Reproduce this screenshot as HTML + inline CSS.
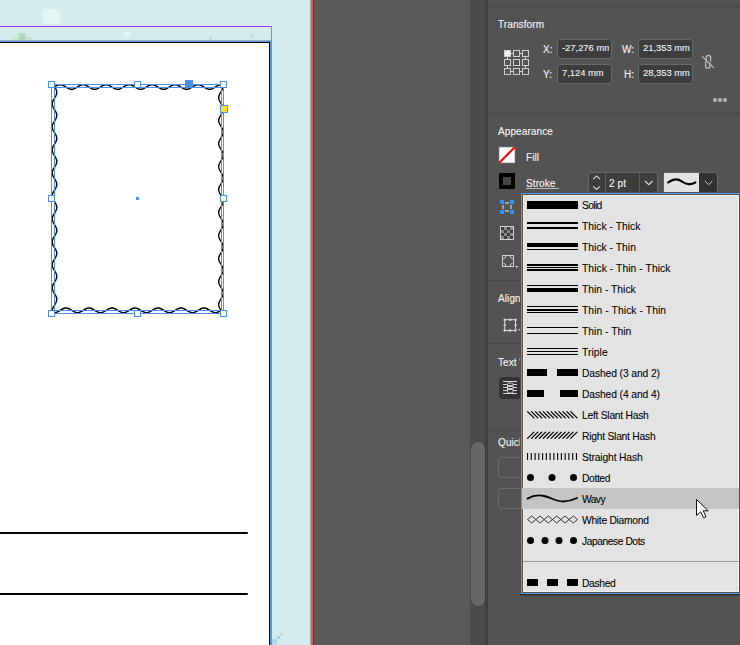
<!DOCTYPE html><html><head><meta charset="utf-8"><style>
*{margin:0;padding:0;box-sizing:border-box}
html,body{width:740px;height:645px;overflow:hidden;background:#d4ecec;font-family:"Liberation Sans",sans-serif}
.a{position:absolute}
.t{position:absolute;white-space:nowrap;color:#f4f4f4;font-size:10px;letter-spacing:0.1px;line-height:12px;-webkit-text-stroke:0.12px #f4f4f4}
.lt{position:absolute;white-space:nowrap;color:#000;font-size:10.3px;line-height:12px;left:582px;-webkit-text-stroke:0.08px #000}
.inp{position:absolute;background:#3d3d3d;border:1px solid #676767;border-radius:3px}
</style></head><body>
<div class="a" style="left:43px;top:9px;width:17px;height:15px;background:#e4f5f5;border-radius:4px;filter:blur(0.5px)"></div>
<div class="a" style="left:12px;top:37px;width:20px;height:4px;background:#c9e3cd;"></div>
<div class="a" style="left:18px;top:33px;width:8px;height:8px;background:#bcdcc2;"></div>
<div class="a" style="left:20px;top:35px;width:4px;height:6px;background:#aed3b6;"></div>
<div class="a" style="left:123px;top:31px;width:8px;height:7px;background:#e2f3f1;border-radius:2px"></div>
<div class="a" style="left:209px;top:37px;width:3px;height:3px;background:#b9dde8;"></div>
<div class="a" style="left:251px;top:35px;width:3px;height:3px;background:#b5dbe8;"></div>
<div class="a" style="left:280px;top:633px;width:3px;height:3px;background:#b9dfe4;"></div>
<div class="a" style="left:277px;top:636px;width:3px;height:3px;background:#9fd2ea;"></div>
<div class="a" style="left:272px;top:639px;width:5px;height:3px;background:#acd9e9;"></div>
<div class="a" style="left:272px;top:642px;width:5px;height:3px;background:#b5dde9;"></div>
<div class="a" style="left:0px;top:26px;width:272px;height:1px;background:#9a35f5;"></div>
<div class="a" style="left:271px;top:26px;width:1px;height:619px;background:#ff44ff;"></div>
<div class="a" style="left:0px;top:40px;width:271px;height:1px;background:#9fb5ad;"></div>
<div class="a" style="left:0px;top:41px;width:271px;height:1px;background:#4b94ee;"></div>
<div class="a" style="left:270px;top:41px;width:1px;height:604px;background:#4b94ee;"></div>
<div class="a" style="left:0px;top:42px;width:270px;height:603px;background:#000;"></div>
<div class="a" style="left:0px;top:43px;width:269px;height:602px;background:#fff;"></div>
<div class="a" style="left:0px;top:532px;width:248px;height:2px;background:#000;border-radius:0 1px 1px 0"></div>
<div class="a" style="left:0px;top:593px;width:248px;height:2px;background:#000;border-radius:0 1px 1px 0"></div>
<svg class="a" style="left:0;top:0" width="320" height="645" viewBox="0 0 320 645">
<g fill="none" stroke="#000" stroke-width="1.4"><path d="M54.5 86.9 L55.5 86.3 L56.5 85.7 L57.5 85.3 L58.5 84.9 L59.5 84.7 L60.5 84.7 L61.5 84.9 L62.5 85.2 L63.5 85.6 L64.5 86.2 L65.5 86.8 L66.5 87.4 L67.5 88.0 L68.5 88.5 L69.5 88.9 L70.5 89.2 L71.5 89.3 L72.5 89.2 L73.5 89.0 L74.5 88.6 L75.5 88.1 L76.5 87.5 L77.5 86.9 L78.5 86.3 L79.5 85.7 L80.5 85.3 L81.5 84.9 L82.5 84.7 L83.5 84.7 L84.5 84.9 L85.5 85.2 L86.5 85.6 L87.5 86.2 L88.5 86.8 L89.5 87.4 L90.5 88.0 L91.5 88.5 L92.5 88.9 L93.5 89.2 L94.5 89.3 L95.5 89.2 L96.5 89.0 L97.5 88.6 L98.5 88.1 L99.5 87.5 L100.5 86.9 L101.5 86.3 L102.5 85.7 L103.5 85.3 L104.5 84.9 L105.5 84.7 L106.5 84.7 L107.5 84.9 L108.5 85.2 L109.5 85.6 L110.5 86.2 L111.5 86.8 L112.5 87.4 L113.5 88.0 L114.5 88.5 L115.5 88.9 L116.5 89.2 L117.5 89.3 L118.5 89.2 L119.5 89.0 L120.5 88.6 L121.5 88.1 L122.5 87.5 L123.5 86.9 L124.5 86.3 L125.5 85.7 L126.5 85.3 L127.5 84.9 L128.5 84.7 L129.5 84.7 L130.5 84.9 L131.5 85.2 L132.5 85.6 L133.5 86.2 L134.5 86.8 L135.5 87.4 L136.5 88.0 L137.5 88.5 L138.5 88.9 L139.5 89.2 L140.5 89.3 L141.5 89.2 L142.5 89.0 L143.5 88.6 L144.5 88.1 L145.5 87.5 L146.5 86.9 L147.5 86.3 L148.5 85.7 L149.5 85.3 L150.5 84.9 L151.5 84.7 L152.5 84.7 L153.5 84.9 L154.5 85.2 L155.5 85.6 L156.5 86.2 L157.5 86.8 L158.5 87.4 L159.5 88.0 L160.5 88.5 L161.5 88.9 L162.5 89.2 L163.5 89.3 L164.5 89.2 L165.5 89.0 L166.5 88.6 L167.5 88.1 L168.5 87.5 L169.5 86.9 L170.5 86.3 L171.5 85.7 L172.5 85.3 L173.5 84.9 L174.5 84.7 L175.5 84.7 L176.5 84.9 L177.5 85.2 L178.5 85.6 L179.5 86.2 L180.5 86.8 L181.5 87.4 L182.5 88.0 L183.5 88.5 L184.5 88.9 L185.5 89.2 L186.5 89.3 L187.5 89.2 L188.5 89.0 L189.5 88.6 L190.5 88.1 L191.5 87.5 L192.5 86.9 L193.5 86.3 L194.5 85.7 L195.5 85.3 L196.5 84.9 L197.5 84.7 L198.5 84.7 L199.5 84.9 L200.5 85.2 L201.5 85.6 L202.5 86.2 L203.5 86.8 L204.5 87.4 L205.5 88.0 L206.5 88.5 L207.5 88.9 L208.5 89.2 L209.5 89.3 L210.5 89.2 L211.5 89.0 L212.5 88.6 L213.5 88.1 L214.5 87.5 L215.5 86.9 L216.5 86.3 L217.5 85.7 L218.5 85.3 L219.5 84.9 L220.5 84.7 L221.5 84.7"/><path d="M223.2 87.0 L223.0 88.0 L222.6 89.0 L222.1 90.0 L221.5 91.0 L220.9 92.0 L220.3 93.0 L219.7 94.0 L219.3 95.0 L218.9 96.0 L218.7 97.0 L218.7 98.0 L218.9 99.0 L219.2 100.0 L219.6 101.0 L220.2 102.0 L220.8 103.0 L221.4 104.0 L222.0 105.0 L222.5 106.0 L222.9 107.0 L223.2 108.0 L223.3 109.0 L223.2 110.0 L223.0 111.0 L222.6 112.0 L222.1 113.0 L221.5 114.0 L220.9 115.0 L220.3 116.0 L219.7 117.0 L219.3 118.0 L218.9 119.0 L218.7 120.0 L218.7 121.0 L218.9 122.0 L219.2 123.0 L219.6 124.0 L220.2 125.0 L220.8 126.0 L221.4 127.0 L222.0 128.0 L222.5 129.0 L222.9 130.0 L223.2 131.0 L223.3 132.0 L223.2 133.0 L223.0 134.0 L222.6 135.0 L222.1 136.0 L221.5 137.0 L220.9 138.0 L220.3 139.0 L219.7 140.0 L219.3 141.0 L218.9 142.0 L218.7 143.0 L218.7 144.0 L218.9 145.0 L219.2 146.0 L219.6 147.0 L220.2 148.0 L220.8 149.0 L221.4 150.0 L222.0 151.0 L222.5 152.0 L222.9 153.0 L223.2 154.0 L223.3 155.0 L223.2 156.0 L223.0 157.0 L222.6 158.0 L222.1 159.0 L221.5 160.0 L220.9 161.0 L220.3 162.0 L219.7 163.0 L219.3 164.0 L218.9 165.0 L218.7 166.0 L218.7 167.0 L218.9 168.0 L219.2 169.0 L219.6 170.0 L220.2 171.0 L220.8 172.0 L221.4 173.0 L222.0 174.0 L222.5 175.0 L222.9 176.0 L223.2 177.0 L223.3 178.0 L223.2 179.0 L223.0 180.0 L222.6 181.0 L222.1 182.0 L221.5 183.0 L220.9 184.0 L220.3 185.0 L219.7 186.0 L219.3 187.0 L218.9 188.0 L218.7 189.0 L218.7 190.0 L218.9 191.0 L219.2 192.0 L219.6 193.0 L220.2 194.0 L220.8 195.0 L221.4 196.0 L222.0 197.0 L222.5 198.0 L222.9 199.0 L223.2 200.0 L223.3 201.0 L223.2 202.0 L223.0 203.0 L222.6 204.0 L222.1 205.0 L221.5 206.0 L220.9 207.0 L220.3 208.0 L219.7 209.0 L219.3 210.0 L218.9 211.0 L218.7 212.0 L218.7 213.0 L218.9 214.0 L219.2 215.0 L219.6 216.0 L220.2 217.0 L220.8 218.0 L221.4 219.0 L222.0 220.0 L222.5 221.0 L222.9 222.0 L223.2 223.0 L223.3 224.0 L223.2 225.0 L223.0 226.0 L222.6 227.0 L222.1 228.0 L221.5 229.0 L220.9 230.0 L220.3 231.0 L219.7 232.0 L219.3 233.0 L218.9 234.0 L218.7 235.0 L218.7 236.0 L218.9 237.0 L219.2 238.0 L219.6 239.0 L220.2 240.0 L220.8 241.0 L221.4 242.0 L222.0 243.0 L222.5 244.0 L222.9 245.0 L223.2 246.0 L223.3 247.0 L223.2 248.0 L223.0 249.0 L222.6 250.0 L222.1 251.0 L221.5 252.0 L220.9 253.0 L220.3 254.0 L219.7 255.0 L219.3 256.0 L218.9 257.0 L218.7 258.0 L218.7 259.0 L218.9 260.0 L219.2 261.0 L219.6 262.0 L220.2 263.0 L220.8 264.0 L221.4 265.0 L222.0 266.0 L222.5 267.0 L222.9 268.0 L223.2 269.0 L223.3 270.0 L223.2 271.0 L223.0 272.0 L222.6 273.0 L222.1 274.0 L221.5 275.0 L220.9 276.0 L220.3 277.0 L219.7 278.0 L219.3 279.0 L218.9 280.0 L218.7 281.0 L218.7 282.0 L218.9 283.0 L219.2 284.0 L219.6 285.0 L220.2 286.0 L220.8 287.0 L221.4 288.0 L222.0 289.0 L222.5 290.0 L222.9 291.0 L223.2 292.0 L223.3 293.0 L223.2 294.0 L223.0 295.0 L222.6 296.0 L222.1 297.0 L221.5 298.0 L220.9 299.0 L220.3 300.0 L219.7 301.0 L219.3 302.0 L218.9 303.0 L218.7 304.0 L218.7 305.0 L218.9 306.0 L219.2 307.0 L219.6 308.0 L220.2 309.0 L220.8 310.0"/><path d="M221.5 310.1 L220.5 310.8 L219.5 311.4 L218.5 311.9 L217.5 312.3 L216.5 312.5 L215.5 312.6 L214.5 312.5 L213.5 312.3 L212.5 311.9 L211.5 311.4 L210.5 310.8 L209.5 310.1 L208.5 309.5 L207.5 309.0 L206.5 308.5 L205.5 308.2 L204.5 308.0 L203.5 308.0 L202.5 308.2 L201.5 308.5 L200.5 309.0 L199.5 309.5 L198.5 310.1 L197.5 310.8 L196.5 311.4 L195.5 311.9 L194.5 312.3 L193.5 312.5 L192.5 312.6 L191.5 312.5 L190.5 312.3 L189.5 311.9 L188.5 311.4 L187.5 310.8 L186.5 310.1 L185.5 309.5 L184.5 309.0 L183.5 308.5 L182.5 308.2 L181.5 308.0 L180.5 308.0 L179.5 308.2 L178.5 308.5 L177.5 309.0 L176.5 309.5 L175.5 310.1 L174.5 310.8 L173.5 311.4 L172.5 311.9 L171.5 312.3 L170.5 312.5 L169.5 312.6 L168.5 312.5 L167.5 312.3 L166.5 311.9 L165.5 311.4 L164.5 310.8 L163.5 310.1 L162.5 309.5 L161.5 309.0 L160.5 308.5 L159.5 308.2 L158.5 308.0 L157.5 308.0 L156.5 308.2 L155.5 308.5 L154.5 309.0 L153.5 309.5 L152.5 310.1 L151.5 310.8 L150.5 311.4 L149.5 311.9 L148.5 312.3 L147.5 312.5 L146.5 312.6 L145.5 312.5 L144.5 312.3 L143.5 311.9 L142.5 311.4 L141.5 310.8 L140.5 310.1 L139.5 309.5 L138.5 309.0 L137.5 308.5 L136.5 308.2 L135.5 308.0 L134.5 308.0 L133.5 308.2 L132.5 308.5 L131.5 309.0 L130.5 309.5 L129.5 310.1 L128.5 310.8 L127.5 311.4 L126.5 311.9 L125.5 312.3 L124.5 312.5 L123.5 312.6 L122.5 312.5 L121.5 312.3 L120.5 311.9 L119.5 311.4 L118.5 310.8 L117.5 310.1 L116.5 309.5 L115.5 309.0 L114.5 308.5 L113.5 308.2 L112.5 308.0 L111.5 308.0 L110.5 308.2 L109.5 308.5 L108.5 309.0 L107.5 309.5 L106.5 310.1 L105.5 310.8 L104.5 311.4 L103.5 311.9 L102.5 312.3 L101.5 312.5 L100.5 312.6 L99.5 312.5 L98.5 312.3 L97.5 311.9 L96.5 311.4 L95.5 310.8 L94.5 310.1 L93.5 309.5 L92.5 309.0 L91.5 308.5 L90.5 308.2 L89.5 308.0 L88.5 308.0 L87.5 308.2 L86.5 308.5 L85.5 309.0 L84.5 309.5 L83.5 310.1 L82.5 310.8 L81.5 311.4 L80.5 311.9 L79.5 312.3 L78.5 312.5 L77.5 312.6 L76.5 312.5 L75.5 312.3 L74.5 311.9 L73.5 311.4 L72.5 310.8 L71.5 310.1 L70.5 309.5 L69.5 309.0 L68.5 308.5 L67.5 308.2 L66.5 308.0 L65.5 308.0 L64.5 308.2 L63.5 308.5 L62.5 309.0 L61.5 309.5 L60.5 310.1 L59.5 310.8 L58.5 311.4 L57.5 311.9 L56.5 312.3 L55.5 312.5 L54.5 312.6"/><path d="M52.2 310.3 L52.4 309.3 L52.8 308.3 L53.2 307.3 L53.8 306.3 L54.4 305.3 L55.0 304.3 L55.6 303.3 L56.1 302.3 L56.5 301.3 L56.7 300.3 L56.8 299.3 L56.7 298.3 L56.4 297.3 L56.0 296.3 L55.5 295.3 L54.9 294.3 L54.3 293.3 L53.7 292.3 L53.1 291.3 L52.7 290.3 L52.4 289.3 L52.2 288.3 L52.2 287.3 L52.4 286.3 L52.8 285.3 L53.2 284.3 L53.8 283.3 L54.4 282.3 L55.0 281.3 L55.6 280.3 L56.1 279.3 L56.5 278.3 L56.7 277.3 L56.8 276.3 L56.7 275.3 L56.4 274.3 L56.0 273.3 L55.5 272.3 L54.9 271.3 L54.3 270.3 L53.7 269.3 L53.1 268.3 L52.7 267.3 L52.4 266.3 L52.2 265.3 L52.2 264.3 L52.4 263.3 L52.8 262.3 L53.2 261.3 L53.8 260.3 L54.4 259.3 L55.0 258.3 L55.6 257.3 L56.1 256.3 L56.5 255.3 L56.7 254.3 L56.8 253.3 L56.7 252.3 L56.4 251.3 L56.0 250.3 L55.5 249.3 L54.9 248.3 L54.3 247.3 L53.7 246.3 L53.1 245.3 L52.7 244.3 L52.4 243.3 L52.2 242.3 L52.2 241.3 L52.4 240.3 L52.8 239.3 L53.2 238.3 L53.8 237.3 L54.4 236.3 L55.0 235.3 L55.6 234.3 L56.1 233.3 L56.5 232.3 L56.7 231.3 L56.8 230.3 L56.7 229.3 L56.4 228.3 L56.0 227.3 L55.5 226.3 L54.9 225.3 L54.3 224.3 L53.7 223.3 L53.1 222.3 L52.7 221.3 L52.4 220.3 L52.2 219.3 L52.2 218.3 L52.4 217.3 L52.8 216.3 L53.2 215.3 L53.8 214.3 L54.4 213.3 L55.0 212.3 L55.6 211.3 L56.1 210.3 L56.5 209.3 L56.7 208.3 L56.8 207.3 L56.7 206.3 L56.4 205.3 L56.0 204.3 L55.5 203.3 L54.9 202.3 L54.3 201.3 L53.7 200.3 L53.1 199.3 L52.7 198.3 L52.4 197.3 L52.2 196.3 L52.2 195.3 L52.4 194.3 L52.8 193.3 L53.2 192.3 L53.8 191.3 L54.4 190.3 L55.0 189.3 L55.6 188.3 L56.1 187.3 L56.5 186.3 L56.7 185.3 L56.8 184.3 L56.7 183.3 L56.4 182.3 L56.0 181.3 L55.5 180.3 L54.9 179.3 L54.3 178.3 L53.7 177.3 L53.1 176.3 L52.7 175.3 L52.4 174.3 L52.2 173.3 L52.2 172.3 L52.4 171.3 L52.8 170.3 L53.2 169.3 L53.8 168.3 L54.4 167.3 L55.0 166.3 L55.6 165.3 L56.1 164.3 L56.5 163.3 L56.7 162.3 L56.8 161.3 L56.7 160.3 L56.4 159.3 L56.0 158.3 L55.5 157.3 L54.9 156.3 L54.3 155.3 L53.7 154.3 L53.1 153.3 L52.7 152.3 L52.4 151.3 L52.2 150.3 L52.2 149.3 L52.4 148.3 L52.8 147.3 L53.2 146.3 L53.8 145.3 L54.4 144.3 L55.0 143.3 L55.6 142.3 L56.1 141.3 L56.5 140.3 L56.7 139.3 L56.8 138.3 L56.7 137.3 L56.4 136.3 L56.0 135.3 L55.5 134.3 L54.9 133.3 L54.3 132.3 L53.7 131.3 L53.1 130.3 L52.7 129.3 L52.4 128.3 L52.2 127.3 L52.2 126.3 L52.4 125.3 L52.8 124.3 L53.2 123.3 L53.8 122.3 L54.4 121.3 L55.0 120.3 L55.6 119.3 L56.1 118.3 L56.5 117.3 L56.7 116.3 L56.8 115.3 L56.7 114.3 L56.4 113.3 L56.0 112.3 L55.5 111.3 L54.9 110.3 L54.3 109.3 L53.7 108.3 L53.1 107.3 L52.7 106.3 L52.4 105.3 L52.2 104.3 L52.2 103.3 L52.4 102.3 L52.8 101.3 L53.2 100.3 L53.8 99.3 L54.4 98.3 L55.0 97.3 L55.6 96.3 L56.1 95.3 L56.5 94.3 L56.7 93.3 L56.8 92.3 L56.7 91.3 L56.4 90.3 L56.0 89.3 L55.5 88.3 L54.9 87.3"/></g>
<g fill="none" stroke="#4a90f0" stroke-width="1">
<rect x="51.5" y="84.5" width="172" height="229"/>
<rect x="54.5" y="87.5" width="167" height="223"/>
</g>
<rect x="48.5" y="81.5" width="6" height="6" fill="#fff" stroke="#4a90f0" stroke-width="1"/>
<rect x="134.5" y="81.5" width="6" height="6" fill="#fff" stroke="#4a90f0" stroke-width="1"/>
<rect x="220.5" y="81.5" width="6" height="6" fill="#fff" stroke="#4a90f0" stroke-width="1"/>
<rect x="48.5" y="195.5" width="6" height="6" fill="#fff" stroke="#4a90f0" stroke-width="1"/>
<rect x="220.5" y="195.5" width="6" height="6" fill="#fff" stroke="#4a90f0" stroke-width="1"/>
<rect x="48.5" y="310.5" width="6" height="6" fill="#fff" stroke="#4a90f0" stroke-width="1"/>
<rect x="134.5" y="310.5" width="6" height="6" fill="#fff" stroke="#4a90f0" stroke-width="1"/>
<rect x="220.5" y="310.5" width="6" height="6" fill="#fff" stroke="#4a90f0" stroke-width="1"/>
<rect x="185" y="80" width="8" height="8" fill="#4a90f0"/>
<rect x="220.5" y="105.5" width="7" height="7" fill="#ffe21a" stroke="#4a90f0" stroke-width="1"/>
<rect x="136" y="197" width="3" height="3" fill="#4a90f0"/>
</svg>
<div class="a" style="left:310px;top:0px;width:1px;height:645px;background:#97aaa8;"></div>
<div class="a" style="left:311px;top:0px;width:1px;height:645px;background:#4b94ee;"></div>
<div class="a" style="left:312px;top:0px;width:1px;height:645px;background:#ee5060;"></div>
<div class="a" style="left:313px;top:0px;width:1px;height:645px;background:#474747;"></div>
<div class="a" style="left:314px;top:0px;width:156px;height:645px;background:#5a5a5a;"></div>
<div class="a" style="left:470px;top:0px;width:15px;height:645px;background:#4a4a4a;"></div>
<div class="a" style="left:471px;top:442px;width:14px;height:164px;background:#676767;border-radius:7px"></div>
<div class="a" style="left:485px;top:0px;width:1px;height:645px;background:#3b3b3b;"></div>
<div class="a" style="left:486px;top:0px;width:1px;height:645px;background:#464646;"></div>
<div class="a" style="left:487px;top:0px;width:1px;height:645px;background:#3b3b3b;"></div>
<div class="a" style="left:488px;top:0px;width:252px;height:645px;background:#535353;"></div>
<div class="a" style="left:488px;top:6px;width:252px;height:1px;background:#474747;"></div>
<div class="a" style="left:488px;top:113px;width:252px;height:1px;background:#474747;"></div>
<div class="a" style="left:488px;top:280px;width:252px;height:1px;background:#474747;"></div>
<div class="a" style="left:488px;top:343px;width:252px;height:1px;background:#474747;"></div>
<div class="a" style="left:488px;top:430px;width:252px;height:1px;background:#474747;"></div>
<!-- Transform -->
<div class="t" style="left:498px;top:19px">Transform</div>
<svg class="a" style="left:500px;top:46px" width="34" height="34" viewBox="500 46 34 34">
<g fill="none" stroke="#cfcfcf" stroke-width="1">
<rect x="504.5" y="50.5" width="6" height="6" fill="#f2f2f2"/><rect x="513.5" y="50.5" width="6" height="6"/><rect x="522.5" y="50.5" width="6" height="6"/>
<rect x="504.5" y="59.5" width="6" height="6"/><rect x="513.5" y="59.5" width="6" height="6"/><rect x="522.5" y="59.5" width="6" height="6"/>
<rect x="504.5" y="68.5" width="6" height="6"/><rect x="513.5" y="68.5" width="6" height="6"/><rect x="522.5" y="68.5" width="6" height="6"/>
<path d="M511 53.5H513M520 53.5H522M511 71.5H513M520 71.5H522M507.5 57V59M507.5 66V68M525.5 57V59M525.5 66V68"/>
</g></svg>
<div class="t" style="left:543px;top:44px">X:</div>
<div class="t" style="left:543px;top:69px">Y:</div>
<div class="t" style="left:622px;top:44px">W:</div>
<div class="t" style="left:624px;top:69px">H:</div>
<div class="inp" style="left:557px;top:39px;width:55px;height:20px"><div class="t" style="left:4px;top:2px;font-size:9.4px;letter-spacing:0;-webkit-text-stroke:0.1px #f4f4f4;width:47px;overflow:hidden">-27,276 mm</div></div>
<div class="inp" style="left:557px;top:64px;width:55px;height:20px"><div class="t" style="left:4px;top:2px;font-size:9.4px;letter-spacing:0;-webkit-text-stroke:0.1px #f4f4f4">7,124 mm</div></div>
<div class="inp" style="left:638px;top:39px;width:55px;height:20px"><div class="t" style="left:4px;top:2px;font-size:9.4px;letter-spacing:0;-webkit-text-stroke:0.1px #f4f4f4">21,353 mm</div></div>
<div class="inp" style="left:638px;top:64px;width:55px;height:20px"><div class="t" style="left:4px;top:2px;font-size:9.4px;letter-spacing:0;-webkit-text-stroke:0.1px #f4f4f4">28,353 mm</div></div>
<svg class="a" style="left:696px;top:50px" width="24" height="24" viewBox="696 50 24 24">
<g fill="none" stroke="#bdbdbd" stroke-width="1.3" stroke-linecap="round">
<path d="M706.3 61.5V57.6a2.15 2.15 0 0 1 4.3 0V61"/>
<path d="M705.6 62.5V66.3a2.15 2.15 0 0 0 4.3 0V63"/>
<path d="M702.4 56.6L713.6 67.6"/>
</g></svg>
<div class="a" style="left:713px;top:98px;width:4px;height:4px;border-radius:2px;background:#b5b5b5"></div>
<div class="a" style="left:718px;top:98px;width:4px;height:4px;border-radius:2px;background:#b5b5b5"></div>
<div class="a" style="left:723px;top:98px;width:4px;height:4px;border-radius:2px;background:#b5b5b5"></div>

<!-- Appearance -->
<div class="t" style="left:498px;top:126px">Appearance</div>
<svg class="a" style="left:498px;top:146px" width="19" height="19" viewBox="498 146 19 19">
<rect x="499" y="147" width="16" height="16" fill="#fff" stroke="#777" stroke-width="0.6"/>
<path d="M499.3 162.7L514.7 147.3" stroke="#f00" stroke-width="2"/>
</svg>
<div class="t" style="left:526px;top:152px">Fill</div>
<div class="a" style="left:499px;top:173px;width:16px;height:16px;background:#000"></div>
<div class="a" style="left:503px;top:177px;width:8px;height:8px;background:#484848"></div>
<div class="t" style="left:526px;top:178px">Stroke</div>
<div class="a" style="left:526px;top:188px;width:33px;height:1px;background:#bdbdbd"></div>

<!-- weight -->
<div class="inp" style="left:588px;top:172px;width:70px;height:21px"></div>
<div class="a" style="left:605px;top:173px;width:1px;height:19px;background:#5e5e5e"></div>
<div class="a" style="left:639px;top:173px;width:1px;height:19px;background:#5e5e5e"></div>
<svg class="a" style="left:588px;top:170px" width="72" height="24" viewBox="588 170 72 24">
<g fill="none" stroke="#dedede" stroke-width="1.1">
<path d="M593.2 179.2L596.6 175.9L600 179.2"/>
<path d="M593.2 186.3L596.6 189.5L600 186.3"/>
<path d="M645 181L648.8 184.7L652.6 181"/>
</g></svg>
<div class="t" style="left:609px;top:178px">2 pt</div>
<!-- stroke type -->
<div class="a" style="left:663px;top:172px;width:55px;height:21px;background:#3a3a3a;border:1px solid #656565;border-radius:3px"></div>
<div class="a" style="left:664px;top:173px;width:35px;height:19px;background:#e2e2e2"></div>
<div class="a" style="left:699px;top:173px;width:18px;height:19px;background:#323232;border-radius:0 3px 3px 0"></div>
<svg class="a" style="left:660px;top:170px" width="60" height="24" viewBox="660 170 60 24">
<path d="M668.2 182.3C674 178.2 678 178.6 682 181.5C686 184.6 691.5 185 695.4 182.3" fill="none" stroke="#000" stroke-width="2.2" stroke-linecap="round"/>
<path d="M704.8 181L708.6 184.6L712.4 181" fill="none" stroke="#d0d0d0" stroke-width="1"/>
</svg>

<!-- left icons under dropdown -->
<svg class="a" style="left:496px;top:196px" width="26" height="80" viewBox="496 196 26 80">
<g fill="#2f93f7"><rect x="500" y="200" width="4" height="4"/><rect x="510" y="200" width="4" height="4"/><rect x="500" y="210" width="4" height="4"/><rect x="510" y="210" width="4" height="4"/></g>
<g fill="#a0a0a0"><rect x="505" y="202" width="4" height="2"/><rect x="505" y="210" width="4" height="2"/><rect x="502" y="205" width="2" height="4"/><rect x="510" y="205" width="2" height="4"/></g>
<rect x="500.5" y="226.5" width="13" height="13" fill="#8a8a8a" stroke="#d0d0d0" stroke-width="1"/>
<g fill="#3c3c3c"><rect x="501" y="227" width="3" height="3"/><rect x="507" y="227" width="3" height="3"/><rect x="504" y="230" width="3" height="3"/><rect x="510" y="230" width="3" height="3"/><rect x="501" y="233" width="3" height="3"/><rect x="507" y="233" width="3" height="3"/><rect x="504" y="236" width="3" height="3"/><rect x="510" y="236" width="3" height="3"/></g>
<rect x="502.5" y="255.5" width="11" height="11" fill="none" stroke="#d0d0d0" stroke-width="1"/>
<path d="M503.5 258.5Q506 258.5 506 256M510 256Q510 258.5 512.5 258.5M512.5 263.5Q510 263.5 510 266M506 266Q506 263.5 503.5 263.5" fill="none" stroke="#d0d0d0" stroke-width="1"/>
<path d="M515 266H518.5L516.75 268Z" fill="#cfcfcf"/>
</svg>
<div class="t" style="left:498px;top:293px">Align</div>
<svg class="a" style="left:498px;top:312px" width="24" height="24" viewBox="498 312 24 24">
<rect x="504.7" y="319.7" width="10.8" height="10.8" fill="none" stroke="#d2d2d2" stroke-width="1.1"/>
<g fill="#d8d8d8"><circle cx="504.7" cy="319.7" r="1.2"/><circle cx="510.1" cy="319.7" r="1.2"/><circle cx="515.5" cy="319.7" r="1.2"/><circle cx="504.7" cy="325.1" r="1.2"/><circle cx="515.5" cy="325.1" r="1.2"/><circle cx="504.7" cy="330.5" r="1.2"/><circle cx="510.1" cy="330.5" r="1.2"/><circle cx="515.5" cy="330.5" r="1.2"/></g>
<path d="M518 329H521L521 332Z" fill="#cfcfcf"/>
</svg>
<div class="t" style="left:498px;top:357px">Text Wrap</div>
<div class="a" style="left:499px;top:377px;width:22px;height:22px;background:#323232;border-radius:4px"></div>
<svg class="a" style="left:496px;top:376px" width="26" height="24" viewBox="496 376 26 24">
<g stroke="#d6d6d6" stroke-width="1.2" fill="none"><path d="M503 381.5H517M503 384.5H507M513 384.5H517M503 387.5H507M513 387.5H517M503 390.5H507M513 390.5H517M503 393.5H517"/></g>
<rect x="507.5" y="383" width="5.5" height="10" rx="1.5" fill="none" stroke="#d0d0d0" stroke-width="1"/>
<rect x="508" y="385" width="4.5" height="2" fill="#d0d0d0"/><rect x="508" y="388" width="4.5" height="2" fill="#d0d0d0"/>
</svg>
<div class="t" style="left:498px;top:437px">Quick Actions</div>
<div class="a" style="left:498px;top:457px;width:40px;height:21px;border:1px solid #6a6a6a;border-radius:3px"></div>
<div class="a" style="left:498px;top:488px;width:40px;height:21px;border:1px solid #6a6a6a;border-radius:3px"></div>

<div class="a" style="left:520px;top:192px;width:220px;height:403px;background:#57504a"></div>
<div class="a" style="left:521px;top:193px;width:219px;height:401px;background:#4aa0f5"></div>
<div class="a" style="left:522px;top:194px;width:218px;height:399px;background:#5a5046"></div>
<div class="a" style="left:523px;top:195px;width:216px;height:397px;background:#f0f0f0"></div>
<div class="a" style="left:524px;top:196px;width:214px;height:395px;background:#e3e3e3"></div>
<div class="a" style="left:739px;top:194px;width:1px;height:399px;background:#4d4d4d"></div>
<div class="a" style="left:520px;top:594px;width:220px;height:1px;background:#2d2a26"></div>
<div class="a" style="left:520px;top:595px;width:220px;height:1px;background:#444"></div>
<div class="a" style="left:522px;top:488px;width:217px;height:21px;background:#c4c4c4"></div>
<div class="a" style="left:523px;top:561px;width:215px;height:1px;background:#9a9a9a"></div>
<svg class="a" style="left:521px;top:193px" width="219" height="401" viewBox="521 193 219 401">
<g fill="#000">
<rect x="527" y="201" width="51" height="8"/>
<rect x="527" y="222" width="51" height="2"/><rect x="527" y="227" width="51" height="2"/>
<rect x="527" y="243" width="51" height="4"/><rect x="527" y="249" width="51" height="1"/>
<rect x="527" y="264" width="51" height="2"/><rect x="527" y="267" width="51" height="1"/><rect x="527" y="269" width="51" height="2"/>
<rect x="527" y="285" width="51" height="1"/><rect x="527" y="288" width="51" height="4"/>
<rect x="527" y="306" width="51" height="1"/><rect x="527" y="309" width="51" height="2"/><rect x="527" y="312" width="51" height="1"/>
<rect x="527" y="327" width="51" height="1"/><rect x="527" y="333" width="51" height="1"/>
<rect x="527" y="348" width="51" height="1"/><rect x="527" y="351" width="51" height="1"/><rect x="527" y="354" width="51" height="1"/>
<rect x="527" y="369" width="20" height="7"/><rect x="557" y="369" width="21" height="7"/>
<rect x="527" y="390" width="17" height="7"/><rect x="560" y="390" width="18" height="7"/>
<circle cx="530.5" cy="477.5" r="3.5"/><circle cx="552" cy="477.5" r="3.5"/><circle cx="573.5" cy="477.5" r="3.5"/>
<circle cx="530.5" cy="540.5" r="3.5"/><circle cx="545" cy="540.5" r="3.5"/><circle cx="559" cy="540.5" r="3.5"/><circle cx="573.5" cy="540.5" r="3.5"/>
<rect x="527" y="579" width="11" height="7"/><rect x="547" y="579" width="11" height="7"/><rect x="567" y="579" width="11" height="7"/>
</g>
<g stroke="#000" stroke-width="1.3" fill="none" stroke-linecap="round"><path d="M527.60 411.6L533.90 417.9M531.52 411.6L537.82 417.9M535.44 411.6L541.74 417.9M539.36 411.6L545.66 417.9M543.28 411.6L549.58 417.9M547.20 411.6L553.50 417.9M551.12 411.6L557.42 417.9M555.04 411.6L561.34 417.9M558.96 411.6L565.26 417.9M562.88 411.6L569.18 417.9M566.80 411.6L573.10 417.9M570.72 411.6L577.02 417.9"/><path d="M527.60 438.4L533.90 432.1M531.52 438.4L537.82 432.1M535.44 438.4L541.74 432.1M539.36 438.4L545.66 432.1M543.28 438.4L549.58 432.1M547.20 438.4L553.50 432.1M551.12 438.4L557.42 432.1M555.04 438.4L561.34 432.1M558.96 438.4L565.26 432.1M562.88 438.4L569.18 432.1M566.80 438.4L573.10 432.1M570.72 438.4L577.02 432.1"/></g><g fill="#000"><rect x="527.00" y="453" width="1.1" height="7"/><rect x="530.76" y="453" width="1.1" height="7"/><rect x="534.52" y="453" width="1.1" height="7"/><rect x="538.28" y="453" width="1.1" height="7"/><rect x="542.04" y="453" width="1.1" height="7"/><rect x="545.80" y="453" width="1.1" height="7"/><rect x="549.56" y="453" width="1.1" height="7"/><rect x="553.32" y="453" width="1.1" height="7"/><rect x="557.08" y="453" width="1.1" height="7"/><rect x="560.84" y="453" width="1.1" height="7"/><rect x="564.60" y="453" width="1.1" height="7"/><rect x="568.36" y="453" width="1.1" height="7"/><rect x="572.12" y="453" width="1.1" height="7"/><rect x="575.88" y="453" width="1.1" height="7"/></g>
<path d="M527.5 498.6C533 495.5 538 494.6 544 496C552 498 556 501.5 563 501.5C569 501.5 573 500 577 498" fill="none" stroke="#000" stroke-width="1.8" stroke-linecap="round"/>
<path d="M527.50 519.5L531.67 516L535.83 519.5L531.67 523ZM535.83 519.5L540.00 516L544.17 519.5L540.00 523ZM544.17 519.5L548.33 516L552.50 519.5L548.33 523ZM552.50 519.5L556.67 516L560.83 519.5L556.67 523ZM560.83 519.5L565.00 516L569.17 519.5L565.00 523ZM569.17 519.5L573.33 516L577.50 519.5L573.33 523Z" fill="none" stroke="#222" stroke-width="0.9"/>
</svg>
<div class="lt" style="top:200px;letter-spacing:-0.650px">Solid</div>
<div class="lt" style="top:221px;letter-spacing:0.017px">Thick - Thick</div>
<div class="lt" style="top:242px;letter-spacing:0.027px">Thick - Thin</div>
<div class="lt" style="top:263px;letter-spacing:0.068px">Thick - Thin - Thick</div>
<div class="lt" style="top:284px;letter-spacing:0.009px">Thin - Thick</div>
<div class="lt" style="top:305px;letter-spacing:0.083px">Thin - Thick - Thin</div>
<div class="lt" style="top:326px;letter-spacing:0.030px">Thin - Thin</div>
<div class="lt" style="top:347px;letter-spacing:0.060px">Triple</div>
<div class="lt" style="top:368px;letter-spacing:-0.107px">Dashed (3 and 2)</div>
<div class="lt" style="top:389px;letter-spacing:-0.107px">Dashed (4 and 4)</div>
<div class="lt" style="top:410px;letter-spacing:-0.257px">Left Slant Hash</div>
<div class="lt" style="top:431px;letter-spacing:-0.240px">Right Slant Hash</div>
<div class="lt" style="top:452px;letter-spacing:-0.142px">Straight Hash</div>
<div class="lt" style="top:473px;letter-spacing:-0.380px">Dotted</div>
<div class="lt" style="top:494px;letter-spacing:-0.600px">Wavy</div>
<div class="lt" style="top:515px;letter-spacing:-0.290px">White Diamond</div>
<div class="lt" style="top:536px;letter-spacing:-0.458px">Japanese Dots</div>
<div class="lt" style="top:578px;letter-spacing:-0.340px">Dashed</div>
<svg class="a" style="left:690px;top:495px" width="24" height="26" viewBox="690 495 24 26">
<path d="M696.5 499.5V515.5L700.7 511.8L703.6 517.8L706 516.7L703.2 510.8H708.2Z" fill="#fff" stroke="#111" stroke-width="1" stroke-linejoin="round"/>
</svg>

</body></html>
